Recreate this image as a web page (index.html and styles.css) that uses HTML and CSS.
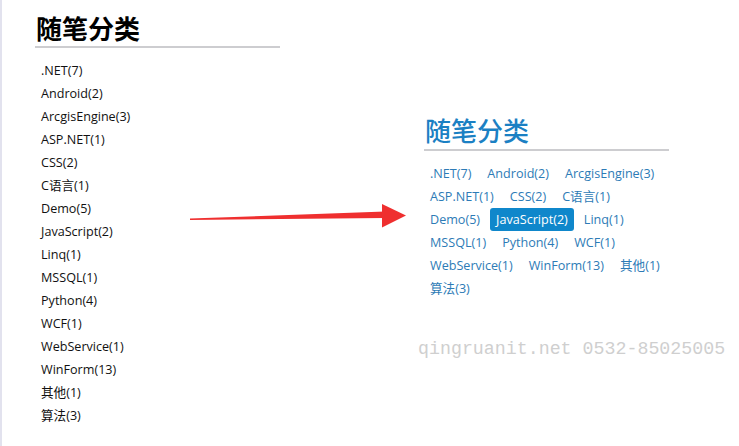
FILE: index.html
```html
<!DOCTYPE html>
<html>
<head>
<meta charset="utf-8">
<link rel="stylesheet" href="styles.css">
</head>
<body>
<div class="page">
  <section class="panel panel-old">
    <h2 class="title">随笔分类</h2>
    <ul class="list">
      <li>.NET(7)</li>
      <li>Android(2)</li>
      <li>ArcgisEngine(3)</li>
      <li>ASP.NET(1)</li>
      <li>CSS(2)</li>
      <li>C语言(1)</li>
      <li>Demo(5)</li>
      <li>JavaScript(2)</li>
      <li>Linq(1)</li>
      <li>MSSQL(1)</li>
      <li>Python(4)</li>
      <li>WCF(1)</li>
      <li>WebService(1)</li>
      <li>WinForm(13)</li>
      <li>其他(1)</li>
      <li>算法(3)</li>
    </ul>
  </section>
  <section class="panel panel-new">
    <h2 class="title title-blue">随笔分类</h2>
    <div class="tags">
      <span class="tag">.NET(7)</span>
      <span class="tag">Android(2)</span>
      <span class="tag">ArcgisEngine(3)</span>
      <span class="tag">ASP.NET(1)</span>
      <span class="tag">CSS(2)</span>
      <span class="tag">C语言(1)</span>
      <span class="tag">Demo(5)</span>
      <span class="tag active">JavaScript(2)</span>
      <span class="tag">Linq(1)</span>
      <span class="tag">MSSQL(1)</span>
      <span class="tag">Python(4)</span>
      <span class="tag">WCF(1)</span>
      <span class="tag">WebService(1)</span>
      <span class="tag">WinForm(13)</span>
      <span class="tag">其他(1)</span>
      <span class="tag">算法(3)</span>
    </div>
  </section>
  <svg class="arrow" width="222" height="36" viewBox="188 196 222 36">
    <polygon points="190,218.6 385,211.5 385,218 190,220" fill="#ef2f2f"/>
    <polygon points="382,204 406,215.5 382,227.5" fill="#ef2f2f"/>
  </svg>
  <div class="watermark">qingruanit.net 0532-85025005</div>
</div>
</body>
</html>
```
FILE: styles.css
```css
html, body {
  margin: 0;
  padding: 0;
  background: #ffffff;
}
.page {
  position: relative;
  width: 739px;
  height: 446px;
  box-sizing: border-box;
  border-left: 2px solid #e2e2ee;
  display: flex;
  font-family: "Open Sans", "Noto Sans CJK SC", sans-serif;
  overflow: hidden;
}
.panel {
  width: 245px;
}
.panel-old {
  margin-left: 33px;
  padding-top: 12px;
}
.panel-new {
  margin-left: 144px;
  padding-top: 114px;
}
.title {
  margin: 0;
  font-family: "Noto Sans CJK SC", sans-serif;
  font-size: 26px;
  line-height: 31px;
  font-weight: 700;
  color: #000;
  padding-left: 1px;
  padding-bottom: 3px;
  border-bottom: 2px solid #cdcdd0;
}
.title-blue {
  color: #1b80c3;
  font-weight: 500;
  padding-bottom: 4px;
}
.list {
  list-style: none;
  margin: 11px 0 0 0;
  padding: 0 0 0 6px;
}
.list li {
  font-size: 12.6px;
  line-height: 23px;
  color: #111;
}
.tags {
  margin-top: 11px;
  display: flex;
  flex-wrap: wrap;
  column-gap: 4px;
}
.tag {
  font-size: 12.6px;
  line-height: 23px;
  padding: 0 6px;
  color: #2d7bb6;
  border-radius: 3px;
}
.tag.active {
  background: #0f87cb;
  color: #fff;
}
.arrow {
  position: absolute;
  left: 186px;
  top: 196px;
}
.watermark {
  position: absolute;
  left: 416px;
  top: 338px;
  font-family: "Liberation Mono", monospace;
  font-size: 18.3px;
  line-height: 22px;
  color: #cfcfcf;
  white-space: nowrap;
}
```
